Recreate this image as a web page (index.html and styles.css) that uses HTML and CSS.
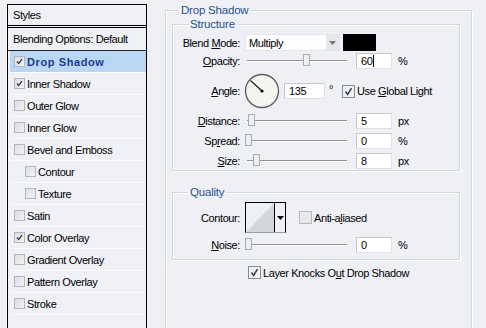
FILE: index.html
```html
<!DOCTYPE html>
<html lang="en">
  <head>
    <meta charset="UTF-8" />
    <meta name="viewport" content="width=device-width, initial-scale=1.0" />
    <title>Layer Style - Drop Shadow</title>
    <link rel="stylesheet" href="styles.css">
  </head>
  <body>
    <div class="sidebar">
      <div class="panel-title">Styles</div>
      <div class="panel-blend">Blending Options: Default</div>
      <ul class="fx-list">
        <li class="fx selected"><span class="cb checked"><svg viewBox="0 0 11 11"><path d="M2.5 5.5 L4.5 8 L8.5 2.5" /></svg></span>Drop Shadow</li>
        <li class="fx"><span class="cb checked"><svg viewBox="0 0 11 11"><path d="M2.5 5.5 L4.5 8 L8.5 2.5" /></svg></span>Inner Shadow</li>
        <li class="fx"><span class="cb"></span>Outer Glow</li>
        <li class="fx"><span class="cb"></span>Inner Glow</li>
        <li class="fx"><span class="cb"></span>Bevel and Emboss</li>
        <li class="fx sub"><span class="cb"></span>Contour</li>
        <li class="fx sub"><span class="cb"></span>Texture</li>
        <li class="fx"><span class="cb"></span>Satin</li>
        <li class="fx"><span class="cb checked"><svg viewBox="0 0 11 11"><path d="M2.5 5.5 L4.5 8 L8.5 2.5" /></svg></span>Color Overlay</li>
        <li class="fx"><span class="cb"></span>Gradient Overlay</li>
        <li class="fx"><span class="cb"></span>Pattern Overlay</li>
        <li class="fx"><span class="cb"></span>Stroke</li>
      </ul>
    </div>

    <div class="main">
      <fieldset class="group outer">
        <legend class="outer-legend">Drop Shadow</legend>

        <fieldset class="group inner structure">
          <legend>Structure</legend>

          <div class="row blend-row">
            <label class="lbl">Blend <u>M</u>ode:</label>
            <div class="select">
              <span class="select-value">Multiply</span>
              <span class="select-btn"><svg viewBox="0 0 7 4"><path d="M0 0 H7 L3.5 4 Z" /></svg></span>
            </div>
            <div class="swatch"></div>
          </div>

          <div class="row">
            <label class="lbl"><u>O</u>pacity:</label>
            <div class="slider"><span class="thumb" style="left:58px"></span></div>
            <div class="field">60<span class="caret"></span></div>
            <span class="unit">%</span>
          </div>

          <div class="row angle-row">
            <label class="lbl"><u>A</u>ngle:</label>
            <svg class="dial" viewBox="0 0 36 36">
              <circle cx="18" cy="18" r="16.5" />
              <line x1="18" y1="18" x2="6.5" y2="7.5" />
              <circle class="dot" cx="18" cy="18" r="1.6" />
            </svg>
            <div class="field angle-field">135</div>
            <span class="deg">°</span>
            <span class="check big checked"><svg viewBox="0 0 13 13"><path d="M3 6.5 L5.5 10 L10 2.5" /></svg></span>
            <span class="check-text">Use <u>G</u>lobal Light</span>
          </div>

          <div class="row">
            <label class="lbl"><u>D</u>istance:</label>
            <div class="slider"><span class="thumb" style="left:3px"></span></div>
            <div class="field">5</div>
            <span class="unit">px</span>
          </div>

          <div class="row">
            <label class="lbl">Sp<u>r</u>ead:</label>
            <div class="slider"><span class="thumb" style="left:0px"></span></div>
            <div class="field">0</div>
            <span class="unit">%</span>
          </div>

          <div class="row">
            <label class="lbl"><u>S</u>ize:</label>
            <div class="slider"><span class="thumb" style="left:8px"></span></div>
            <div class="field">8</div>
            <span class="unit">px</span>
          </div>
        </fieldset>

        <fieldset class="group inner quality">
          <legend>Quality</legend>

          <div class="row contour-row">
            <label class="lbl">Contour:</label>
            <div class="contour">
              <svg class="contour-curve" viewBox="0 0 30 30" preserveAspectRatio="none">
                <rect width="30" height="30" fill="#eef1f4" />
                <path d="M0 30 L30 0 L30 30 Z" fill="#d3d7db" />
              </svg>
              <span class="contour-btn"><svg viewBox="0 0 7 4"><path d="M0 0 H7 L3.5 4 Z" /></svg></span>
            </div>
            <span class="check big"></span>
            <span class="check-text">Anti-a<u>l</u>iased</span>
          </div>

          <div class="row">
            <label class="lbl"><u>N</u>oise:</label>
            <div class="slider"><span class="thumb" style="left:0px"></span></div>
            <div class="field">0</div>
            <span class="unit">%</span>
          </div>
        </fieldset>

        <div class="knockout">
          <span class="check big checked"><svg viewBox="0 0 13 13"><path d="M3 6.5 L5.5 10 L10 2.5" /></svg></span>
          <span class="check-text">Layer Knocks O<u>u</u>t Drop Shadow</span>
        </div>
      </fieldset>
    </div>
  </body>
</html>
```

FILE: styles.css
```css
body {
  font-family: "Liberation Sans", Arial, sans-serif;
  font-size: 11px;
  letter-spacing: -0.4px;
  color: #000;
  background: #eef0f5;
  display: flex;
  height: 100vh;
  margin: 0;
  overflow: hidden;
}

/* left list of effects */
.sidebar {
  box-sizing: border-box;
  width: 140px;
  margin: 4px 0 0 7px;
  border: 1px solid #000;
  border-bottom: none;
  background: #eff1f6;
}
.panel-title {
  height: 20px;
  line-height: 21px;
  padding-left: 5px;
  border-bottom: 3px double #000;
}
.panel-blend {
  height: 22px;
  line-height: 22px;
  padding-left: 5px;
  border-bottom: 1px solid #222;
}
.fx-list {
  list-style: none;
  margin: 0;
  padding: 0 0 0 2px;
}
.fx {
  display: flex;
  align-items: center;
  height: 21px;
  border-bottom: 1px solid #fafbfd;
  padding-left: 4px;
}
.fx.sub {
  padding-left: 15px;
}
.fx.selected {
  background: #b9d7f3;
  color: #1b3c8c;
  font-weight: bold;
  letter-spacing: 0.6px;
}
.cb {
  box-sizing: border-box;
  width: 11px;
  height: 11px;
  margin-right: 2px;
  border: 1px solid #b3b6bc;
  background: linear-gradient(135deg, #dcdee3, #f1f2f5);
  display: flex;
}
.cb svg,
.check svg {
  width: 100%;
  height: 100%;
  fill: none;
  stroke: #2c3440;
  stroke-width: 1.6;
}

/* right option groups */
.main {
  flex: 1;
}
.group {
  margin: 0;
  padding: 0;
  border: 1px solid #d3d7de;
  box-shadow: 1px 1px 0 #fff, inset 1px 1px 0 #fff;
}
.group legend {
  padding: 0 2px;
  line-height: 13px;
  color: #1f4f8e;
  font-size: 11.5px;
  letter-spacing: -0.2px;
}
.outer {
  box-sizing: border-box;
  width: 307px;
  height: 340px;
  margin: 4px 0 0 18px;
  padding: 0 11px 0 6px;
}
.outer-legend {
  margin-left: 7px;
}
.inner {
  padding-left: 0;
}
.inner legend {
  margin-left: 15px;
}
.structure {
  padding-top: 3px;
  padding-bottom: 1px;
  margin-top: 1px;
}
.quality {
  margin-top: 15px;
  padding-top: 3px;
  padding-bottom: 6px;
}

.row {
  display: flex;
  align-items: center;
  height: 17px;
  margin-top: 3px;
}
.row:first-of-type {
  margin-top: 0;
}
.blend-row + .row {
  margin-top: 1px;
}
.lbl {
  width: 67px;
  text-align: right;
  margin-right: 5px;
  flex-shrink: 0;
}
.select {
  box-sizing: border-box;
  width: 95px;
  height: 17px;
  display: flex;
  align-items: center;
  background: #fdfdfe;
  border: 1px solid #e2e5ea;
}
.select-value {
  flex: 1;
  padding-left: 3px;
}
.select-btn {
  width: 13px;
  height: 15px;
  background: #e4e7ec;
  display: flex;
  align-items: center;
  justify-content: center;
}
.select-btn svg,
.contour-btn svg {
  width: 7px;
  height: 4px;
}
.select-btn svg path {
  fill: #777;
}
.swatch {
  width: 33px;
  height: 17px;
  margin-left: 3px;
  background: #000;
}

.slider {
  position: relative;
  width: 106px;
  height: 17px;
  flex-shrink: 0;
}
.slider::before {
  content: "";
  position: absolute;
  left: 2px;
  right: 4px;
  top: 8px;
  height: 1px;
  background: #8d9096;
  box-shadow: 0 1px 0 #fff;
}
.thumb {
  position: absolute;
  top: 2px;
  width: 7px;
  height: 12px;
  box-sizing: border-box;
  border: 1px solid #a9adb3;
  background: #eceef1;
}
.field {
  box-sizing: border-box;
  width: 36px;
  height: 16px;
  line-height: 14px;
  padding-left: 4px;
  margin-left: 5px;
  background: #fff;
  border: 1px solid #dde0e5;
  border-top-color: #c5c9cf;
  border-left-color: #c5c9cf;
  display: flex;
  align-items: center;
}
.caret {
  width: 1px;
  height: 12px;
  margin-left: 1px;
  background: #000;
}
.unit {
  margin-left: 6px;
}

.angle-row {
  height: 36px;
  margin-top: 4px;
}
.dial {
  width: 36px;
  height: 36px;
  margin-left: -1px;
}
.dial circle {
  fill: #f5f5ef;
  stroke: #5c5f63;
  stroke-width: 1.4;
}
.dial line {
  stroke: #111;
  stroke-width: 1.1;
}
.dial .dot {
  fill: #000;
  stroke: none;
}
.angle-field {
  width: 41px;
  margin-left: 4px;
}
.deg {
  margin-left: 4px;
  margin-top: -4px;
}
.check {
  box-sizing: border-box;
  width: 13px;
  height: 13px;
  border: 1px solid #8a8d92;
  background: #eef0f4;
  display: flex;
  flex-shrink: 0;
}
.angle-row .check {
  margin-left: 9px;
}
.check-text {
  margin-left: 2px;
  white-space: nowrap;
}

.contour-row {
  height: 31px;
  margin-top: 3px;
}
.contour {
  box-sizing: border-box;
  width: 41px;
  height: 31px;
  display: flex;
  border: 1px solid #000;
  border-bottom-color: #9a9ea4;
}
.contour-curve {
  width: 29px;
  height: 29px;
}
.contour-btn {
  width: 10px;
  border-left: 1px solid #000;
  background: #eef0f4;
  display: flex;
  align-items: center;
  justify-content: center;
}
.contour-btn svg path {
  fill: #000;
}
.contour-row .check {
  margin-left: 13px;
  border-color: #b5b8bd;
  background: #e6e8ec;
}
.quality .contour-row + .row {
  margin-top: 3px;
}

.knockout {
  display: flex;
  align-items: center;
  height: 15px;
  margin: 5px 0 0 76px;
}
```
